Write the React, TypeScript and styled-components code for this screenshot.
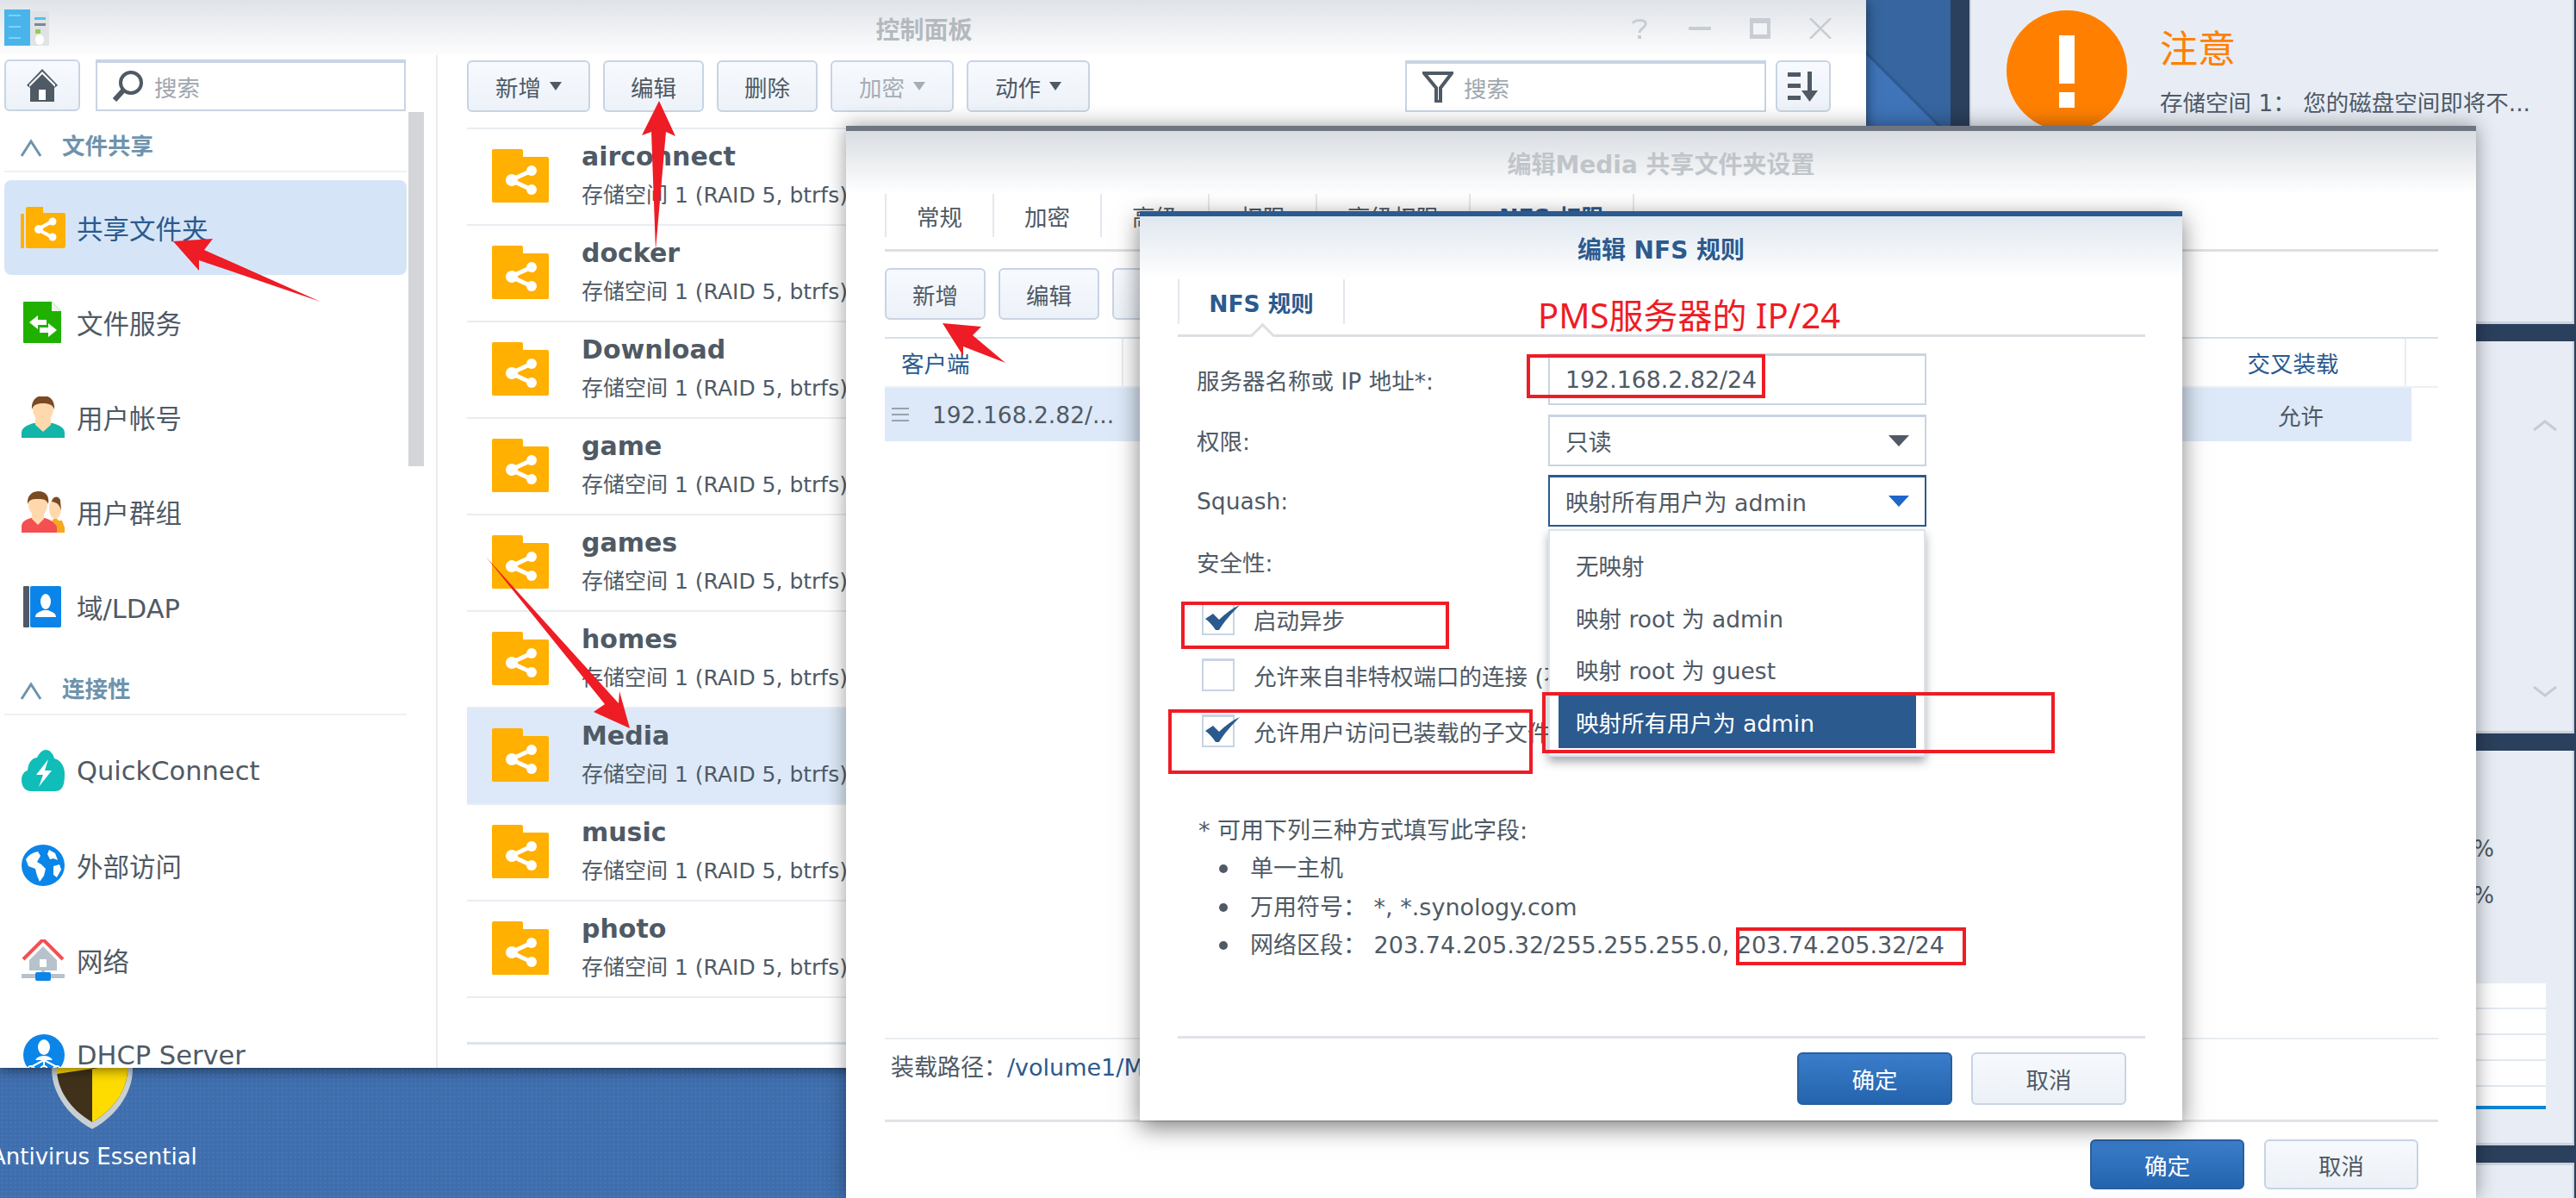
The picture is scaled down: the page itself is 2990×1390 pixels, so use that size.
import * as React from 'react'

import styled, { createGlobalStyle, css } from 'styled-components'

const FONT = `'DejaVu Sans', 'Noto Sans CJK SC', sans-serif`
const TEXT = '#4f5a65'
const BLUE = '#2b5a8e'
const RED = '#ee1c25'
const LINE = '#e9edf2'

const FOLDERS = ['airconnect', 'docker', 'Download', 'game', 'games', 'homes', 'Media', 'music', 'photo']
const TAB_ONE = [
  { label: '常规', width: 125 },
  { label: '加密', width: 125 },
  { label: '高级', width: 125 },
  { label: '权限', width: 125 },
  { label: '高级权限', width: 178 },
  { label: 'NFS 权限', width: 192, active: true },
]
const SQUASH = ['无映射', '映射 root 为 admin', '映射 root 为 guest', '映射所有用户为 admin']

const GlobalStyle = createGlobalStyle`
  html, body {
    margin: 0;
    padding: 0;
    overflow: hidden;
    background: #3e6eae;
  }
  * {
    box-sizing: border-box;
  }
`

const FolderIcon = ({ size = 66 }: { size?: number }) => (
  <svg width={size} height={size * 0.94} viewBox="0 0 66 62">
    <path d="M2 0h32a2 2 0 0 1 2 2v7h28a2 2 0 0 1 2 2v49a2 2 0 0 1-2 2H2a2 2 0 0 1-2-2V2a2 2 0 0 1 2-2z" fill="#ffb000" />
    <path d="M46 25L22 36l24 11" fill="none" stroke="#fff" strokeWidth="5" />
    <circle cx="46" cy="25" r="6" fill="#fff" />
    <circle cx="23" cy="36" r="7" fill="#fff" />
    <circle cx="46" cy="47" r="6" fill="#fff" />
  </svg>
)

const NavFolderIcon = () => (
  <svg width="52" height="48" viewBox="0 0 52 48">
    <path d="M0 8h4v40H0z" fill="#ffb000" />
    <path d="M8 0h18v7h24a2 2 0 0 1 2 2v37a2 2 0 0 1-2 2H8a2 2 0 0 1-2-2V2a2 2 0 0 1 2-2z" fill="#ffb000" />
    <path d="M36 17L20 26l16 9" fill="none" stroke="#fff" strokeWidth="4" />
    <circle cx="37" cy="17" r="4.5" fill="#fff" />
    <circle cx="21" cy="26" r="5" fill="#fff" />
    <circle cx="37" cy="35" r="4.5" fill="#fff" />
  </svg>
)

const ServiceIcon = () => (
  <svg width="52" height="48" viewBox="0 0 52 48">
    <path d="M3 1a1 1 0 0 1 1-1h32l11 11v36a1 1 0 0 1-1 1H4a1 1 0 0 1-1-1z" fill="#20b100" />
    <path d="M36 0v11h11z" fill="#e9f7e4" />
    <path d="M10 24l10-8v5h10v6H20v5zM42 33l-10-8v5H22v6h10v5z" fill="#fff" />
  </svg>
)

const UserIcon = ({ shirt }: { shirt: string }) => (
  <svg width="52" height="48" viewBox="0 0 52 48">
    <path d="M1 48v-6c0-6 7-9 14-11h22c7 2 14 5 14 11v6z" fill={shirt} />
    <path d="M17 22h18v11l-9 8-9-8z" fill="#ffd9ad" />
    <ellipse cx="26" cy="14" rx="12" ry="15" fill="#ffd9ad" />
    <path d="M13 15C12 4 19-1 26-1s14 5 13 16c-2-5-5-7-13-7s-11 2-13 7z" fill="#7a4a22" />
  </svg>
)

const GroupIcon = () => (
  <svg width="52" height="48" viewBox="0 0 52 48">
    <path d="M35 48v-12l5-6 4 4h4l3 8v6z" fill="#f8a81d" />
    <ellipse cx="40" cy="20" rx="7" ry="12" fill="#ffd9ad" />
    <path d="M36 12c1-6 7-8 10-2l1 12c-2-6-4-9-11-10z" fill="#7a4a22" />
    <path d="M1 48v-7c0-6 5-8 11-10h16c6 2 10 4 14 10v7z" fill="#f44f52" />
    <path d="M13 22h14v10l-7 7-7-7z" fill="#ffd9ad" />
    <ellipse cx="20" cy="15" rx="11" ry="14" fill="#ffd9ad" />
    <path d="M8 15C7 4 14 0 21 0s13 5 11 15c-2-5-4-6-12-6s-10 1-12 6z" fill="#7a4a22" />
  </svg>
)

const BookIcon = () => (
  <svg width="52" height="48" viewBox="0 0 52 48">
    <rect x="3" y="0" width="7" height="48" rx="1" fill="#4f5a65" />
    <rect x="11" y="0" width="36" height="48" rx="2" fill="#0a84e8" />
    <ellipse cx="29" cy="18" rx="6" ry="9" fill="#fff" />
    <path d="M17 36c0-5 5-6 9-8h6c4 2 9 3 9 8z" fill="#fff" />
  </svg>
)

const CloudIcon = () => (
  <svg width="52" height="48" viewBox="0 0 52 48">
    <path d="M12 48C4 48 1 41 1 35c0-6 3-10 7-11C9 12 16 9 19 9 22 3 26 0 29 0c5 0 9 5 10 10 8 2 12 10 12 18 0 8-1 13-3 16-2 3-5 4-9 4z" fill="#10bdb8" />
    <path d="M32 11L18 29h8l-5 14 15-19h-8z" fill="#fff" />
  </svg>
)

const GlobeIcon = () => (
  <svg width="52" height="48" viewBox="0 0 52 48">
    <ellipse cx="26" cy="24" rx="25" ry="24" fill="#0b85e8" />
    <path d="M6 17c4-6 9-8 14-9l3 5-4 7 5 3 5 5-2 8-5 7-3-7-2-8-8-3zM33 6l7 4 3 8-5-2-4 1-3-6zM38 25l7-2 2 6-5 9-4-3z" fill="#fff" />
  </svg>
)

const NetworkIcon = () => (
  <svg width="52" height="48" viewBox="0 0 52 48">
    <path d="M3 23L26 0l23 23" fill="none" stroke="#f44f52" strokeWidth="4" />
    <path d="M26 8l16 16v12H10V24z" fill="#b8c2cc" />
    <rect x="22" y="23" width="8" height="9" fill="#fff" />
    <rect x="24" y="32" width="4" height="8" fill="#b8c2cc" />
    <rect x="1" y="40" width="50" height="5" fill="#b8c2cc" />
    <rect x="17" y="38" width="18" height="10" rx="2" fill="#0b85e8" />
  </svg>
)

const DhcpIcon = () => (
  <svg width="52" height="48" viewBox="0 0 52 48">
    <ellipse cx="27" cy="24" rx="24" ry="24" fill="#0b85e8" />
    <ellipse cx="27" cy="15" rx="7" ry="9" fill="#fff" />
    <path d="M17 30c2-4 7-5 10-5s8 1 10 5z" fill="#fff" />
    <path d="M27 28v8M27 30L12 38M27 30l15 8" stroke="#fff" strokeWidth="2" fill="none" />
    <circle cx="12" cy="41" r="4" fill="none" stroke="#fff" strokeWidth="2" />
    <circle cx="27" cy="41" r="4" fill="none" stroke="#fff" strokeWidth="2" />
    <circle cx="42" cy="41" r="4" fill="none" stroke="#fff" strokeWidth="2" />
  </svg>
)

const NAV_TOP = [
  { label: '共享文件夹', icon: <NavFolderIcon />, active: true },
  { label: '文件服务', icon: <ServiceIcon /> },
  { label: '用户帐号', icon: <UserIcon shirt="#12b5a8" /> },
  { label: '用户群组', icon: <GroupIcon /> },
  { label: '域/LDAP', icon: <BookIcon /> },
]
const NAV_BOTTOM = [
  { label: 'QuickConnect', icon: <CloudIcon /> },
  { label: '外部访问', icon: <GlobeIcon /> },
  { label: '网络', icon: <NetworkIcon /> },
  { label: 'DHCP Server', icon: <DhcpIcon /> },
]

const Caret = ({ muted }: { muted?: boolean }) => (
  <svg width="14" height="12" viewBox="0 0 14 12">
    <path d="M0 1h14L7 11z" fill={muted ? '#a6adb5' : '#4f5a65'} />
  </svg>
)

const SelectArrow = ({ color }: { color: string }) => (
  <svg width="24" height="13" viewBox="0 0 24 13">
    <path d="M0 0h24L12 13z" fill={color} />
  </svg>
)

const Chevron = ({ up }: { up?: boolean }) => (
  <svg width="28" height="16" viewBox="0 0 28 16">
    <path d={up ? 'M1 13L14 3l13 10' : 'M1 3l13 10L27 3'} fill="none" stroke="#c5ccd6" strokeWidth="3" />
  </svg>
)

const SectionChevron = () => (
  <svg width="26" height="26" viewBox="0 0 26 26">
    <path d="M2 22L13 5l11 17" fill="none" stroke="#6e93ad" strokeWidth="3" />
  </svg>
)

const CheckMark = () => (
  <svg width="40" height="30" viewBox="0 0 40 30">
    <path d="M0 16l9-6 7 7C23 10 31 4 40 0 31 9 22 19 16 29h-4C9 24 4 19 0 16z" fill={BLUE} />
  </svg>
)

const Annotations = () => (
  <AnnotationLayer viewBox="0 0 2990 1390" width="2990" height="1390">
    <g fill={RED}>
      <polygon points="765,117 784,158 773,153 761,290 756,153 745,157" />
      <polygon points="201,280 247,277 237,290 372,350 231,302 231,314" />
      <polygon points="564,646 718,816 719,802 731,845 689,826 702,817" />
      <polygon points="1094,375 1139,379 1129,389 1167,421 1118,402 1118,413" />
    </g>
    <g fill="none" stroke={RED} strokeWidth="4">
      <rect x="1774" y="413" width="273" height="47" />
      <rect x="1373" y="700" width="307" height="51" />
      <rect x="1358" y="825" width="419" height="71" />
      <rect x="1792" y="805" width="591" height="67" />
      <rect x="2017" y="1078" width="263" height="40" />
    </g>
  </AnnotationLayer>
)

export default function App() {
  return (
    <Desktop>
      <GlobalStyle />
      <WallpaperFold />
      <Shield viewBox="0 0 94 132" width="94" height="132">
        <path d="M0 0h94v62c0 32-24 58-47 70C24 120 0 94 0 62z" fill="#c9d0d3" />
        <path d="M6 0h82v62c0 28-20 50-41 62C26 112 6 90 6 62z" fill="#40321a" />
        <path d="M6 0h41v62l-41 6zM47 62l41-6v6c0 28-20 50-41 62z" fill="#ffdc00" />
      </Shield>
      <ShieldLabel>Antivirus Essential</ShieldLabel>

      <WidgetColumn>
        <AlertPanel>
          <AlertBadge>
            <AlertStem />
            <AlertDot />
          </AlertBadge>
          <div>
            <AlertTitle>注意</AlertTitle>
            <AlertText>存储空间 1：{'\u00a0'}您的磁盘空间即将不...</AlertText>
          </div>
        </AlertPanel>
        <ChevronPanel>
          <Chevron up />
          <Chevron />
        </ChevronPanel>
        <UsagePanel>
          <UsageValue>%</UsageValue>
          <UsageValue>%</UsageValue>
          <Chart />
        </UsagePanel>
        <WidgetStub />
      </WidgetColumn>

      <PanelWindow>
        <PanelTitleBar>
          <svg width="52" height="44" viewBox="0 0 52 44">
            <rect x="0" y="0" width="30" height="42" fill="#49b4ea" />
            <path d="M5 7h14M5 20h14M5 33h14" stroke="#7fd0f5" strokeWidth="2" />
            <rect x="30" y="2" width="22" height="40" fill="#dfe3e6" />
            <rect x="35" y="9" width="13" height="3" fill="#4fc3ee" />
            <rect x="35" y="16" width="13" height="3" fill="#7b8894" />
            <rect x="36" y="23" width="6" height="5" fill="#8fd14f" />
            <ellipse cx="41" cy="35" rx="5" ry="6" fill="#fff" />
          </svg>
          <PanelTitle>控制面板</PanelTitle>
          <WindowControls>
            <svg width="26" height="24" viewBox="0 0 26 24">
              <path d="M5 6c2-4 14-5 15 0 1 5-7 6-7 11" fill="none" stroke="#c8cdd3" strokeWidth="3" />
              <rect x="11" y="20" width="4" height="4" fill="#c8cdd3" />
            </svg>
            <svg width="26" height="24" viewBox="0 0 26 24">
              <rect x="0" y="10" width="26" height="4" fill="#c8cdd3" />
            </svg>
            <svg width="26" height="24" viewBox="0 0 26 24">
              <rect x="1" y="0" width="24" height="24" fill="#c8cdd3" />
              <rect x="5" y="6" width="16" height="13" fill="#f3f4f6" />
            </svg>
            <svg width="26" height="24" viewBox="0 0 26 24">
              <path d="M1 0l24 24M25 0L1 24" stroke="#c8cdd3" strokeWidth="2.5" />
            </svg>
          </WindowControls>
        </PanelTitleBar>

        <PanelBody>
          <Sidebar>
            <SidebarTools>
              <ToolButton $width={88}>
                <svg width="36" height="38" viewBox="0 0 36 38">
                  <path d="M18 0l18 19-4 3v16H4V22l-4-3z" fill="#4f5a65" />
                  <path d="M18 6L3 21v-3L18 3l15 15v3z" fill="#fff" />
                  <rect x="14" y="24" width="8" height="12" fill="#fff" />
                </svg>
              </ToolButton>
              <SearchBox $width={360}>
                <svg width="36" height="36" viewBox="0 0 36 36">
                  <ellipse cx="21" cy="14" rx="12" ry="12" fill="none" stroke="#4f5a65" strokeWidth="4" />
                  <path d="M12 23L2 34" stroke="#4f5a65" strokeWidth="6" />
                </svg>
                <Placeholder>搜索</Placeholder>
              </SearchBox>
            </SidebarTools>
            <NavArea>
              <NavList>
                <SectionHeader $first>
                  <SectionChevron />
                  文件共享
                </SectionHeader>
                <NavGroup>
                  {NAV_TOP.map((item) => (
                    <NavItem key={item.label} $active={item.active}>
                      {item.icon}
                      {item.label}
                    </NavItem>
                  ))}
                </NavGroup>
                <SectionHeader>
                  <SectionChevron />
                  连接性
                </SectionHeader>
                <NavGroup>
                  {NAV_BOTTOM.map((item) => (
                    <NavItem key={item.label}>
                      {item.icon}
                      {item.label}
                    </NavItem>
                  ))}
                </NavGroup>
              </NavList>
              <ScrollThumb />
            </NavArea>
          </Sidebar>

          <MainPane>
            <Toolbar>
              <ToolButton $width={143}>
                新增 <Caret />
              </ToolButton>
              <ToolButton $width={117}>编辑</ToolButton>
              <ToolButton $width={117}>删除</ToolButton>
              <ToolButton $width={143} $muted>
                加密 <Caret muted />
              </ToolButton>
              <ToolButton $width={143}>
                动作 <Caret />
              </ToolButton>
              <ToolSpacer />
              <FilterBox $width={419}>
                <svg width="36" height="36" viewBox="0 0 36 36">
                  <path d="M2 2h32L21 19v16h-5V19z" fill="none" stroke="#4f5a65" strokeWidth="4" />
                </svg>
                <Placeholder>搜索</Placeholder>
              </FilterBox>
              <ToolButton $width={64}>
                <svg width="36" height="36" viewBox="0 0 36 36">
                  <path d="M0 2h15v5H0zM0 15h15v5H0zM0 29h15v5H0z" fill="#4f5a65" />
                  <path d="M23 1h5v22h7L25.500 36 16 23h7z" fill="#4f5a65" />
                </svg>
              </ToolButton>
            </Toolbar>
            <FolderList>
              {FOLDERS.map((name) => (
                <FolderRow key={name} $selected={name === 'Media'}>
                  <FolderIcon />
                  <div>
                    <FolderName>{name}</FolderName>
                    <FolderMeta>存储空间 1 (RAID 5, btrfs)</FolderMeta>
                  </div>
                </FolderRow>
              ))}
            </FolderList>
            <ListEnd />
          </MainPane>
        </PanelBody>
      </PanelWindow>

      <ShareDialog>
        <ShareTitle>编辑Media 共享文件夹设置</ShareTitle>
        <ShareBody>
          <ShareTabs>
            {TAB_ONE.map((tab) => (
              <ShareTab key={tab.label} $width={tab.width} $active={tab.active}>
                {tab.label}
              </ShareTab>
            ))}
          </ShareTabs>
          <ShareActions>
            <ToolButton $width={117}>新增</ToolButton>
            <ToolButton $width={117}>编辑</ToolButton>
            <ToolButton $width={117}>删除</ToolButton>
          </ShareActions>
          <RuleTableHead>
            <RuleHeadCell $width={277} $left>客户端</RuleHeadCell>
            <RuleHeadCell $width={1228} />
            <RuleHeadCell $width={261}>交叉装载</RuleHeadCell>
          </RuleTableHead>
          <RuleTableRow>
            <svg width="20" height="16" viewBox="0 0 20 16">
              <path d="M0 1h20M0 8h20M0 15h20" stroke="#98a2ad" strokeWidth="2" />
            </svg>
            <RuleClient>192.168.2.82/...</RuleClient>
            <RuleCross>允许</RuleCross>
          </RuleTableRow>
          <ShareSpacer />
          <MountPath>
            装载路径：<MountValue>/volume1/Media</MountValue>
          </MountPath>
          <DialogFooter $pad={20}>
            <DialogButton $primary $width={179} $height={58}>确定</DialogButton>
            <DialogButton $width={179} $height={58}>取消</DialogButton>
          </DialogFooter>
        </ShareBody>
      </ShareDialog>

      <RuleDialog>
        <RuleTitle>编辑 NFS 规则</RuleTitle>
        <RuleBody>
          <RuleTabs>
            <RuleTab>NFS 规则</RuleTab>
          </RuleTabs>
          <FormGrid>
            <FormLabel>服务器名称或 IP 地址*:</FormLabel>
            <Field>192.168.2.82/24</Field>
            <FormLabel>权限:</FormLabel>
            <Field>
              只读
              <SelectArrow color="#4f5a65" />
            </Field>
            <FormLabel>Squash:</FormLabel>
            <Field $focused>
              映射所有用户为 admin
              <SelectArrow color="#1e66c8" />
            </Field>
            <FormLabel>安全性:</FormLabel>
            <div />
          </FormGrid>
          <CheckList>
            <CheckRow>
              <CheckBox>
                <CheckSlot>
                  <CheckMark />
                </CheckSlot>
              </CheckBox>
              启动异步
            </CheckRow>
            <CheckRow>
              <CheckBox />
              允许来自非特权端口的连接 (不安全)
            </CheckRow>
            <CheckRow>
              <CheckBox>
                <CheckSlot>
                  <CheckMark />
                </CheckSlot>
              </CheckBox>
              允许用户访问已装载的子文件夹
            </CheckRow>
          </CheckList>
          <Notes>
            <NoteLine>* 可用下列三种方式填写此字段:</NoteLine>
            <NoteItem>单一主机</NoteItem>
            <NoteItem>万用符号： *, *.synology.com</NoteItem>
            <NoteItem>网络区段： 203.74.205.32/255.255.255.0, 203.74.205.32/24</NoteItem>
          </Notes>
          <RuleFooter>
            <DialogButton $primary $width={180} $height={61}>确定</DialogButton>
            <DialogButton $width={180} $height={61}>取消</DialogButton>
          </RuleFooter>
        </RuleBody>
        <Dropdown>
          {SQUASH.map((option, index) => (
            <DropdownItem key={option} $selected={index === SQUASH.length - 1}>
              {option}
            </DropdownItem>
          ))}
        </Dropdown>
        <PmsNote>PMS服务器的 IP/24</PmsNote>
      </RuleDialog>

      <Annotations />
    </Desktop>
  )
}

const Desktop = styled.div`
  position: relative;
  width: 2990px;
  height: 1390px;
  overflow: hidden;
  font-family: ${FONT};
  font-size: 26.5px;
  color: ${TEXT};
  background-color: #3e6eae;
  background-image: radial-gradient(rgba(255, 255, 255, 0.05) 1px, transparent 1.5px);
  background-size: 5px 5px;
`

const WallpaperFold = styled.div`
  position: absolute;
  left: 2166px;
  top: 0;
  width: 100px;
  height: 146px;
  background: linear-gradient(45deg, #3f74b8 0 58px, #2f5b93 58px 62px, #36659f 62px 100%);
`

const Shield = styled.svg`
  position: absolute;
  left: 60px;
  top: 1178px;
`

const ShieldLabel = styled.div`
  position: absolute;
  left: -11px;
  top: 1326px;
  font-size: 26px;
  line-height: 32px;
  color: #fff;
  white-space: nowrap;
`

const WidgetColumn = styled.div`
  position: absolute;
  left: 2264px;
  top: 0;
  width: 726px;
  height: 1390px;
  padding: 0 2px 0 22px;
  background: #2b405c;
  display: flex;
  flex-direction: column;
  gap: 20px;
`

const WidgetCard = styled.div`
  background: #e8edf5;
  border-left: 2px solid #cdd4de;
  border-right: 2px solid #cdd4de;
  border-bottom: 3px solid #cdd4de;
`

const AlertPanel = styled(WidgetCard)`
  height: 376px;
  padding: 12px 0 0 41px;
  display: flex;
  gap: 38px;
`

const AlertBadge = styled.div`
  width: 140px;
  height: 140px;
  border-radius: 50%;
  background: #ff8000;
  padding-top: 29px;
  display: flex;
  flex-direction: column;
  align-items: center;
  gap: 10px;
`

const AlertStem = styled.div`
  width: 18px;
  height: 56px;
  background: #fff;
`

const AlertDot = styled.div`
  width: 18px;
  height: 18px;
  background: #fff;
`

const AlertTitle = styled.div`
  margin-top: 22px;
  font-size: 44px;
  line-height: 48px;
  color: #ff8000;
`

const AlertText = styled.div`
  margin-top: 20px;
  font-size: 26.5px;
  line-height: 36px;
  white-space: nowrap;
`

const ChevronPanel = styled(WidgetCard)`
  height: 455px;
  padding: 90px 18px 38px 0;
  display: flex;
  flex-direction: column;
  align-items: flex-end;
  justify-content: space-between;
`

const UsagePanel = styled(WidgetCard)`
  height: 458px;
  padding: 98px 31px 0 0;
  display: flex;
  flex-direction: column;
  align-items: flex-end;
`

const UsageValue = styled.div`
  height: 54px;
  margin-right: 60px;
  line-height: 32px;
  font-size: 26px;
`

const Chart = styled.div`
  margin-top: 64px;
  width: 300px;
  height: 146px;
  background:
    linear-gradient(#0e86d4, #0e86d4) left bottom / 100% 4px no-repeat,
    repeating-linear-gradient(#fff 0 28px, #e2e8f0 28px 30px);
`

const WidgetStub = styled(WidgetCard)`
  flex: 1;
  border-bottom: 0;
  border-top: 3px solid #cdd4de;
`

const windowHeader = css`
  display: flex;
  align-items: center;
  justify-content: center;
  font-weight: bold;
  flex: none;
`

const PanelWindow = styled.div`
  position: absolute;
  left: 0;
  top: 0;
  width: 2166px;
  height: 1239px;
  background: #fff;
  box-shadow: 0 2px 14px rgba(0, 0, 0, 0.55);
  display: flex;
  flex-direction: column;
  overflow: hidden;
`

const PanelTitleBar = styled.div`
  height: 64px;
  flex: none;
  padding: 8px 40px 6px 5px;
  display: grid;
  grid-template-columns: 1fr auto 1fr;
  align-items: center;
  background: linear-gradient(#dfe3e8, #fdfdfe);
`

const PanelTitle = styled.div`
  font-size: 28px;
  font-weight: bold;
  color: #b4b9be;
  margin-left: 14px;
`

const WindowControls = styled.div`
  justify-self: end;
  display: flex;
  gap: 44px;
`

const PanelBody = styled.div`
  flex: 1;
  min-height: 0;
  display: flex;
`

const Sidebar = styled.div`
  width: 508px;
  flex: none;
  padding: 5px 0 0 5px;
  margin-top: 0;
  border-right: 2px solid #e8ebef;
`

const SidebarTools = styled.div`
  display: flex;
  gap: 18px;
  height: 61px;
`

const ToolButton = styled.div<{ $width: number; $muted?: boolean }>`
  width: ${(p) => p.$width}px;
  height: 60px;
  flex: none;
  border: 2px solid #c8d4e3;
  border-radius: 6px;
  background: linear-gradient(#f7faff, #edf2f8);
  color: ${(p) => (p.$muted ? '#a6adb5' : TEXT)};
  display: flex;
  align-items: center;
  justify-content: center;
  gap: 10px;
  font-size: 26.5px;
`

const SearchBox = styled.div<{ $width: number }>`
  width: ${(p) => p.$width}px;
  height: 60px;
  flex: none;
  border: 2px solid #c8d4e3;
  border-top-width: 4px;
  background: #fff;
  padding-left: 18px;
  display: flex;
  align-items: center;
  gap: 12px;
`

const FilterBox = styled(SearchBox)`
  margin-right: -4px;
`

const Placeholder = styled.span`
  color: #a0a7ae;
  font-size: 26.5px;
`

const NavArea = styled.div`
  display: flex;
  gap: 2px;
`

const NavList = styled.div`
  width: 467px;
  flex: none;
`

const ScrollThumb = styled.div`
  width: 18px;
  height: 411px;
  background: #d3d5d9;
`

const SectionHeader = styled.div<{ $first?: boolean }>`
  height: ${(p) => (p.$first ? 70 : 71)}px;
  padding: 0 0 13px 18px;
  border-bottom: 2px solid #eef1f4;
  display: flex;
  align-items: flex-end;
  gap: 23px;
  font-size: 26.5px;
  line-height: 30px;
  font-weight: bold;
  color: #6e93ad;
`

const NavGroup = styled.div`
  padding-top: 9px;
`

const NavItem = styled.div<{ $active?: boolean }>`
  height: 110px;
  padding-left: 19px;
  display: flex;
  align-items: center;
  gap: 13px;
  font-size: 30.500px;
  border-radius: 8px;
  white-space: nowrap;
  background: ${(p) => (p.$active ? '#d5e5f7' : 'transparent')};
  color: ${(p) => (p.$active ? BLUE : TEXT)};
`

const MainPane = styled.div`
  flex: 1;
  min-width: 0;
  padding: 6px 41px 0 34px;
  display: flex;
  flex-direction: column;
`

const Toolbar = styled.div`
  height: 78px;
  flex: none;
  display: flex;
  align-items: flex-start;
  gap: 15px;
`

const ToolSpacer = styled.div`
  flex: 1;
`

const FolderList = styled.div`
  border-top: 2px solid ${LINE};
`

const FolderRow = styled.div<{ $selected?: boolean }>`
  height: 112px;
  padding: 23px 0 0 29px;
  display: flex;
  gap: 38px;
  border-bottom: 2px solid ${LINE};
  background: ${(p) => (p.$selected ? '#dde9f8' : 'transparent')};
`

const FolderName = styled.div`
  margin-top: -9px;
  font-size: 30px;
  line-height: 36px;
  font-weight: bold;
  color: ${TEXT};
`

const FolderMeta = styled.div`
  margin-top: 9px;
  font-size: 25px;
  line-height: 36px;
  white-space: nowrap;
`

const ListEnd = styled.div`
  margin-top: 51px;
  height: 3px;
  background: #dce4ec;
`

const ShareDialog = styled.div`
  position: absolute;
  left: 982px;
  top: 146px;
  width: 1892px;
  height: 1244px;
  background: #fff;
  border-top: 6px solid #6f7580;
  box-shadow: 0 0 22px rgba(0, 0, 0, 0.4);
  display: flex;
  flex-direction: column;
`

const ShareTitle = styled.div`
  ${windowHeader};
  height: 73px;
  font-size: 28px;
  color: #c0c5ca;
  background: linear-gradient(#d9dde2, #fff);
`

const ShareBody = styled.div`
  flex: 1;
  padding: 0 44px 10px 45px;
  display: flex;
  flex-direction: column;
`

const ShareTabs = styled.div`
  height: 67px;
  flex: none;
  padding-bottom: 14px;
  display: flex;
  border-bottom: 3px solid #dcdfe3;
`

const ShareTab = styled.div<{ $width: number; $active?: boolean }>`
  width: ${(p) => p.$width}px;
  display: flex;
  align-items: center;
  justify-content: center;
  border-left: 2px solid #e3e8ee;
  font-size: 26.5px;
  font-weight: ${(p) => (p.$active ? 'bold' : 'normal')};
  color: ${(p) => (p.$active ? BLUE : TEXT)};
  &:last-child {
    border-right: 2px solid #e3e8ee;
  }
`

const ShareActions = styled.div`
  flex: none;
  padding-top: 19px;
  height: 99px;
  display: flex;
  gap: 15px;
`

const RuleTableHead = styled.div`
  flex: none;
  height: 59px;
  display: flex;
  border-top: 2px solid #d5e0ec;
  border-bottom: 2px solid #ebf0f5;
`

const RuleHeadCell = styled.div<{ $width: number; $left?: boolean }>`
  width: ${(p) => p.$width}px;
  flex: none;
  display: flex;
  align-items: center;
  justify-content: ${(p) => (p.$left ? 'flex-start' : 'center')};
  padding-left: ${(p) => (p.$left ? 19 : 0)}px;
  border-right: 2px solid #e8edf3;
  color: ${BLUE};
  font-size: 26.5px;
`

const RuleTableRow = styled.div`
  flex: none;
  width: 1772px;
  height: 62px;
  padding-left: 8px;
  display: flex;
  align-items: center;
  background: #dde9f8;
`

const RuleClient = styled.div`
  margin-left: 27px;
  width: 1562px;
  font-size: 26.5px;
`

const RuleCross = styled.div`
  font-size: 26.5px;
`

const ShareSpacer = styled.div`
  flex: 1;
`

const MountPath = styled.div`
  flex: none;
  height: 62px;
  padding: 11px 0 0 7px;
  border-top: 2px solid ${LINE};
  font-size: 27px;
  white-space: nowrap;
`

const MountValue = styled.span`
  color: ${BLUE};
`

const DialogFooter = styled.div<{ $pad: number }>`
  flex: none;
  margin-top: 33px;
  padding: ${(p) => p.$pad}px 23px 0 0;
  border-top: 3px solid #e0e3e7;
  display: flex;
  justify-content: flex-end;
  gap: 23px;
`

const DialogButton = styled.div<{ $primary?: boolean; $width: number; $height: number }>`
  width: ${(p) => p.$width}px;
  height: ${(p) => p.$height}px;
  flex: none;
  display: flex;
  align-items: center;
  justify-content: center;
  border-radius: 6px;
  font-size: 26.5px;
  ${(p) =>
    p.$primary
      ? css`
          border: 2px solid #2a5f9e;
          background: linear-gradient(#3b7dca, #2464ae);
          color: #fff;
        `
      : css`
          border: 2px solid #c8d4e3;
          background: linear-gradient(#f6f9fd, #ecf1f7);
          color: ${TEXT};
        `}
`

const RuleDialog = styled.div`
  position: absolute;
  left: 1323px;
  top: 245px;
  width: 1210px;
  height: 1055px;
  background: #fff;
  border-top: 6px solid ${BLUE};
  box-shadow: 0 8px 26px rgba(0, 0, 0, 0.5);
  display: flex;
  flex-direction: column;
`

const RuleTitle = styled.div`
  ${windowHeader};
  height: 73px;
  font-size: 28px;
  color: ${BLUE};
  background: linear-gradient(#dfe7ef, #fff);
`

const RuleBody = styled.div`
  flex: 1;
  padding: 0 43px 0 44px;
  display: flex;
  flex-direction: column;
`

const RuleTabs = styled.div`
  flex: none;
  height: 67px;
  padding-top: 0;
  border-bottom: 3px solid #dcdfe3;
`

const RuleTab = styled.div`
  position: relative;
  width: 194px;
  height: 52px;
  display: flex;
  align-items: center;
  justify-content: center;
  border-left: 2px solid #e3e8ee;
  border-right: 2px solid #e3e8ee;
  color: ${BLUE};
  font-size: 26.5px;
  font-weight: bold;
  &::after {
    content: '';
    position: absolute;
    left: 86px;
    top: 55px;
    width: 18px;
    height: 18px;
    background: #fff;
    border-left: 3px solid #dcdfe3;
    border-top: 3px solid #dcdfe3;
    transform: rotate(45deg);
  }
`

const FormGrid = styled.div`
  flex: none;
  margin-top: 19px;
  padding-left: 22px;
  display: grid;
  grid-template-columns: 408px 439px;
  grid-auto-rows: 60px;
  row-gap: 10.500px;
  align-items: center;
`

const FormLabel = styled.div`
  font-size: 26.5px;
  white-space: nowrap;
`

const Field = styled.div<{ $focused?: boolean }>`
  height: 60px;
  padding: 0 18px;
  display: flex;
  align-items: center;
  justify-content: space-between;
  border: 2px solid ${(p) => (p.$focused ? BLUE : '#c8d4e3')};
  border-top-width: 3px;
  background: #fff;
  font-size: 26.8px;
  white-space: nowrap;
`

const CheckList = styled.div`
  flex: none;
  margin-top: 4px;
  padding-left: 28px;
`

const CheckRow = styled.div`
  height: 65px;
  display: flex;
  align-items: center;
  gap: 22px;
  font-size: 26.5px;
  white-space: nowrap;
`

const CheckBox = styled.div`
  position: relative;
  width: 38px;
  height: 38px;
  flex: none;
  border: 2px solid #c8d4e3;
  border-top-width: 3px;
  background: #fff;
`

const CheckSlot = styled.div`
  position: absolute;
  left: 2px;
  top: 0;
  line-height: 0;
`

const Notes = styled.div`
  flex: none;
  margin-top: 61px;
  padding-left: 24px;
`

const NoteLine = styled.div`
  height: 44.500px;
  line-height: 44px;
  font-size: 27px;
  white-space: nowrap;
`

const NoteItem = styled(NoteLine)`
  position: relative;
  padding-left: 60px;
  &::before {
    content: '';
    position: absolute;
    left: 24px;
    top: 17px;
    width: 10px;
    height: 10px;
    border-radius: 50%;
    background: ${TEXT};
  }
`

const RuleFooter = styled.div`
  flex: none;
  margin-top: 82px;
  padding: 16px 22px 0 0;
  border-top: 3px solid #e0e3e7;
  display: flex;
  justify-content: flex-end;
  gap: 22px;
`

const Dropdown = styled.div`
  position: absolute;
  left: 474px;
  top: 363px;
  width: 438px;
  height: 264px;
  padding: 9px 9px 9px 10px;
  background: #fff;
  border: 2px solid #dde3ea;
  box-shadow: 0 6px 10px rgba(60, 70, 85, 0.45);
  display: flex;
  flex-direction: column;
`

const DropdownItem = styled.div<{ $selected?: boolean }>`
  height: 60.700px;
  flex: none;
  padding-left: 20px;
  display: flex;
  align-items: center;
  font-size: 26.5px;
  white-space: nowrap;
  background: ${(p) => (p.$selected ? BLUE : 'transparent')};
  color: ${(p) => (p.$selected ? '#fff' : TEXT)};
`

const PmsNote = styled.div`
  position: absolute;
  left: 462px;
  top: 90px;
  font-family: 'Noto Sans', 'Noto Sans CJK SC', sans-serif;
  font-size: 40px;
  line-height: 50px;
  color: ${RED};
  white-space: nowrap;
`

const AnnotationLayer = styled.svg`
  position: absolute;
  left: 0;
  top: 0;
  pointer-events: none;
`
